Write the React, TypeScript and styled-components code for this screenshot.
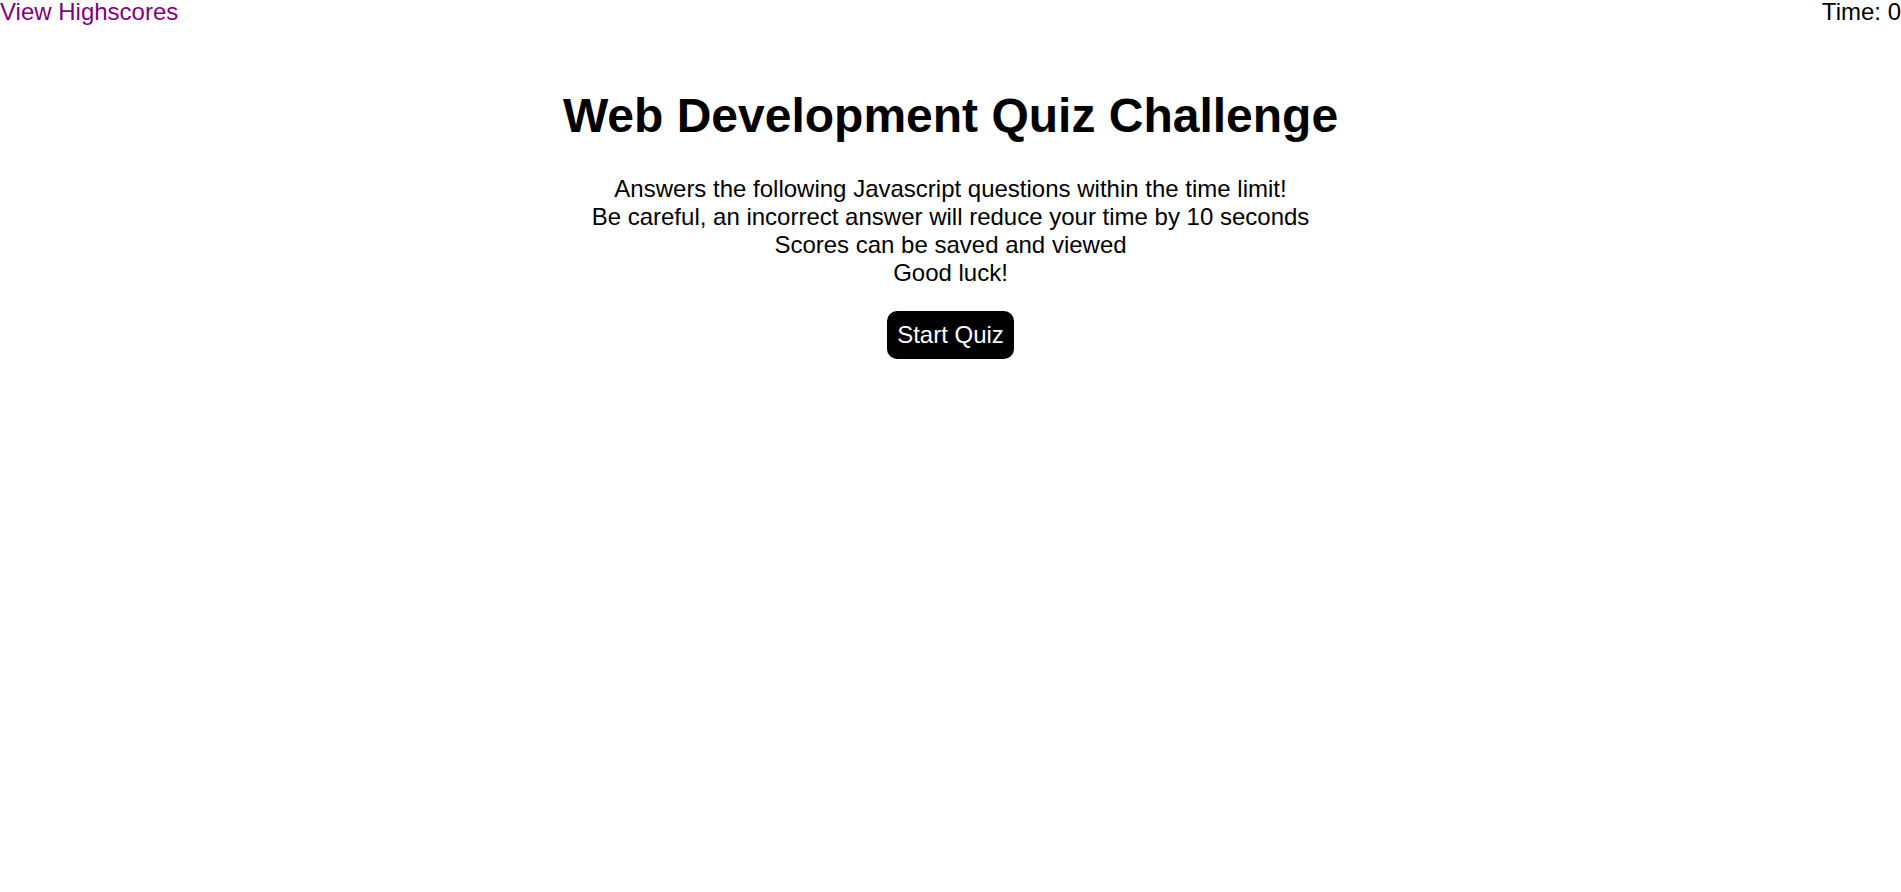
import React, { useState } from "react";
import styled, { createGlobalStyle } from "styled-components";

const GlobalStyle = createGlobalStyle`
  body {
    margin: 0;
    background: #ffffff;
    font-family: "Liberation Sans", Arial, sans-serif;
    font-size: 24px;
    color: #000000;
  }
`;

const StyledHeader = styled.header`
  display: flex;
  justify-content: space-between;
  align-items: flex-start;
  line-height: 24px;
`;

const HighscoreLink = styled.a`
  color: #800080;
  text-decoration: none;
  cursor: pointer;
`;

const Timer = styled.div`
  color: #000000;
`;

const Main = styled.main`
  display: flex;
  flex-direction: column;
  align-items: center;
  text-align: center;
  padding-top: 64px;
`;

const Title = styled.h1`
  font-size: 48px;
  font-weight: bold;
  margin: 0 0 32px;
`;

const Intro = styled.p`
  margin: 0 0 24px;
  line-height: normal;
`;

const StartButton = styled.button`
  font-family: "Liberation Sans", Arial, sans-serif;
  font-size: 24px;
  line-height: normal;
  color: #ffffff;
  background: #000000;
  border: none;
  border-radius: 10px;
  padding: 10px;
  cursor: pointer;
`;

const introLines = [
  "Answers the following Javascript questions within the time limit!",
  "Be careful, an incorrect answer will reduce your time by 10 seconds",
  "Scores can be saved and viewed",
  "Good luck!",
];

function App() {
  const [time] = useState(0);

  return (
    <>
      <GlobalStyle />
      <StyledHeader>
        <HighscoreLink href="#">View Highscores</HighscoreLink>
        <Timer>Time: {time}</Timer>
      </StyledHeader>

      <Main>
        <Title>Web Development Quiz Challenge</Title>
        <Intro>
          {introLines.map((line, index) => (
            <React.Fragment key={index}>
              {line}
              {index < introLines.length - 1 && <br />}
            </React.Fragment>
          ))}
        </Intro>
        <StartButton>Start Quiz</StartButton>
      </Main>
    </>
  );
}

export default App;
